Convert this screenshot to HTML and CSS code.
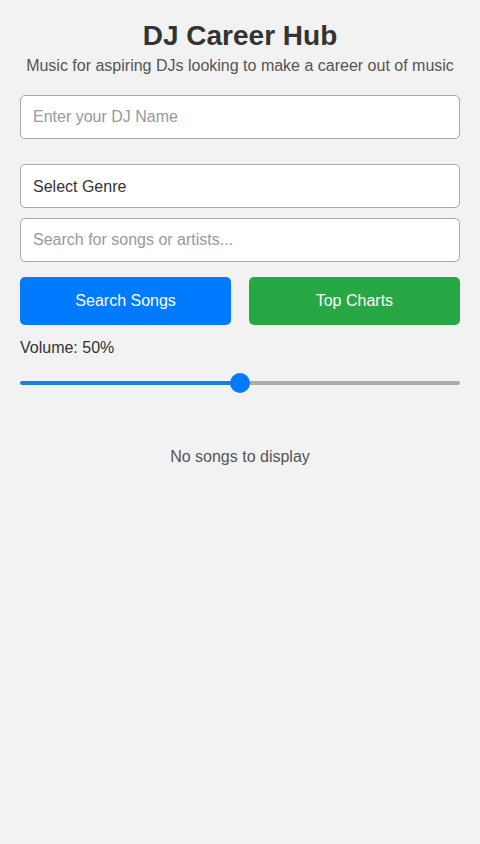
FILE: index.html
```html
<!DOCTYPE html>
<html lang="en">
<head>
<meta charset="utf-8">
<meta name="viewport" content="width=device-width, initial-scale=1">
<title>DJ Career Hub</title>
<link rel="stylesheet" href="styles.css">
</head>
<body>
<div class="app">
  <h1 class="title">DJ Career Hub</h1>
  <p class="subtitle">Music for aspiring DJs looking to make a career out of music</p>
  <input class="field field-name" type="text" placeholder="Enter your DJ Name">
  <select class="field field-select">
    <option>Select Genre</option>
    <option>House</option>
    <option>Techno</option>
    <option>Hip Hop</option>
  </select>
  <input class="field field-search" type="text" placeholder="Search for songs or artists...">
  <div class="actions">
    <button class="btn btn-blue">Search Songs</button>
    <button class="btn btn-green">Top Charts</button>
  </div>
  <div class="volume-label">Volume: 50%</div>
  <input class="volume" type="range" min="0" max="100" value="50">
  <div class="songs">No songs to display</div>
</div>
</body>
</html>
```
FILE: styles.css
```css
* { box-sizing: border-box; }
html, body { margin: 0; padding: 0; }
body {
  background: #f2f2f2;
  font-family: "Liberation Sans", Arial, sans-serif;
  color: #333;
}
.app {
  padding: 20px;
  display: flex;
  flex-direction: column;
}
.title {
  margin: 0 0 5px;
  font-size: 28px;
  font-weight: bold;
  text-align: center;
  color: #333;
}
.subtitle {
  margin: 0 0 20px;
  font-size: 16px;
  text-align: center;
  color: #555;
}
.field {
  display: block;
  width: 100%;
  height: 44px;
  padding: 12px;
  font-family: inherit;
  font-size: 16px;
  color: #333;
  background: #fff;
  border: 1px solid #aaa;
  border-radius: 5px;
  outline: none;
}
.field::placeholder { color: #999; }
.field-name { margin-bottom: 25px; }
.field-select {
  -webkit-appearance: none;
  appearance: none;
  padding: 0 12px;
  margin-bottom: 10px;
}
.field-search { margin-bottom: 15px; }
.actions {
  display: flex;
  justify-content: space-between;
  margin-bottom: 14px;
}
.btn {
  width: 48%;
  height: 48px;
  border: none;
  border-radius: 5px;
  color: #fff;
  font-family: inherit;
  font-size: 16px;
}
.btn-blue { background: #007bff; }
.btn-green { background: #28a745; }
.volume-label {
  font-size: 16px;
  line-height: 18px;
  color: #333;
  margin-bottom: 16px;
}
.volume {
  -webkit-appearance: none;
  appearance: none;
  width: 100%;
  height: 20px;
  margin: 0;
  background: transparent;
}
.volume::-webkit-slider-runnable-track {
  height: 4px;
  border-radius: 2px;
  background: linear-gradient(to right, #1a7fe0 50%, #aaa 50%);
}
.volume::-webkit-slider-thumb {
  -webkit-appearance: none;
  width: 20px;
  height: 20px;
  border-radius: 50%;
  background: #007bff;
  margin-top: -8px;
  border: none;
}
.songs {
  margin-top: 55px;
  text-align: center;
  font-size: 16px;
  color: #555;
}
```
